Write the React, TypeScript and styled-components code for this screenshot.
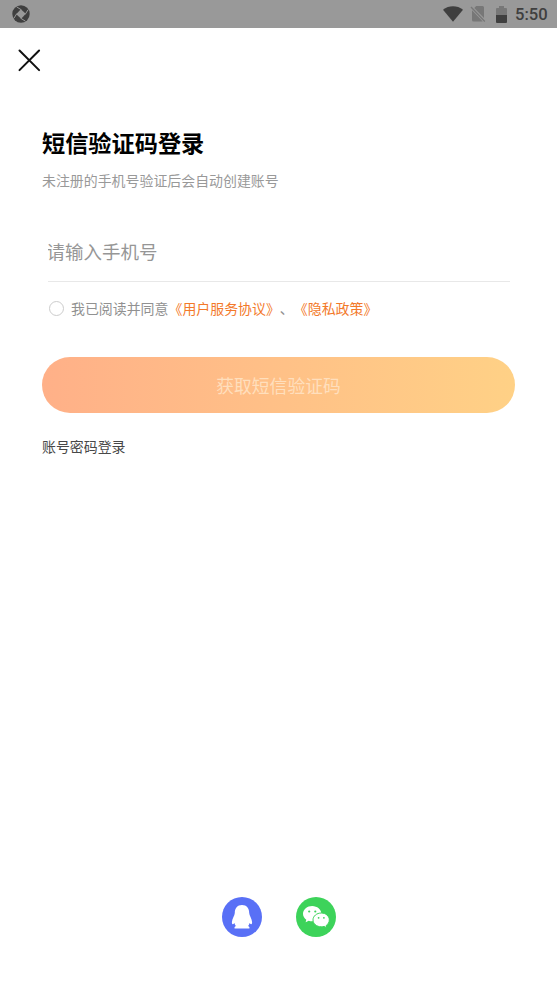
import React from "react";
import styled, { createGlobalStyle } from "styled-components";

const Global = createGlobalStyle`
  *, *::before, *::after { box-sizing: border-box; }
  body { margin: 0; background: #fff; }
  button, input { font: inherit; border: 0; padding: 0; background: none; }
`;

const Screen = styled.div`
  width: 100%;
  max-width: 557px;
  height: 990px;
  display: flex;
  flex-direction: column;
  background: #fff;
  overflow: hidden;
  font-family: "Noto Sans CJK SC", sans-serif;
`;

const StatusBar = styled.header`
  height: 28px;
  flex: none;
  display: flex;
  align-items: center;
  justify-content: space-between;
  padding: 0 10px 0 11px;
  background: #999;
  svg { display: block; }
`;

const StatusGroup = styled.div`
  display: flex;
  align-items: center;
`;

const WifiIcon = styled.svg`
  margin-right: 7px;
`;

const NoSimIcon = styled.svg`
  margin-right: 10px;
`;

const BatteryIcon = styled.svg`
  margin-right: 8px;
`;

const Clock = styled.time`
  width: 32px;
  padding-top: 2px;
  font: 500 16.6px/26px Roboto, sans-serif;
  color: #3f3f3f;
  white-space: nowrap;
`;

const TopBar = styled.nav`
  height: 65px;
  flex: none;
  padding: 20px 17px;
`;

const CloseButton = styled.button`
  display: block;
  width: 25px;
  height: 25px;
  svg { display: block; }
`;

const Content = styled.main`
  flex: 1;
  display: flex;
  flex-direction: column;
  align-items: stretch;
  padding: 32px 42px 0;
`;

const Title = styled.h1`
  margin: 0;
  font-size: 23.2px;
  font-weight: 700;
  line-height: 34px;
  color: #000;
`;

const Subtitle = styled.p`
  margin: 11px 0 0;
  font-size: 13.93px;
  line-height: 20px;
  color: #999;
`;

const PhoneField = styled.input`
  margin: 31px 5px 0 6px;
  height: 61px;
  border-bottom: 1px solid #e8e8e8;
  border-radius: 0;
  outline: none;
  font-size: 18.5px;
  color: #333;
  text-indent: -1.5px;
  &::placeholder { color: #969696; opacity: 1; }
`;

const Agreement = styled.div`
  display: flex;
  align-items: center;
  margin: 16px 0 0 7px;
  height: 20px;
`;

const Radio = styled.span`
  width: 15px;
  height: 15px;
  margin-right: 7px;
  border: 1px solid #ccc;
  border-radius: 50%;
`;

const AgreementText = styled.span`
  font-size: 13.93px;
  line-height: 20px;
  color: #919191;
  white-space: nowrap;
  text-spacing-trim: space-all;
`;

const Policy = styled.span`
  color: #f3792a;
`;

const SubmitButton = styled.button`
  height: 56px;
  margin-top: 39px;
  border-radius: 28px;
  background: linear-gradient(90deg, #ffb088, #ffd186);
  font-size: 17.8px;
  line-height: 56px;
  color: #ffdfbd;
`;

const PasswordLogin = styled.button`
  align-self: flex-start;
  margin-top: 23px;
  font-size: 13.93px;
  line-height: 20px;
  color: #484848;
`;

const SocialRow = styled.footer`
  flex: none;
  display: flex;
  justify-content: center;
  gap: 34px;
  padding-bottom: 53px;
`;

const SocialButton = styled.button<{ $color: string }>`
  width: 40px;
  height: 40px;
  border-radius: 50%;
  background: ${(p) => p.$color};
  svg { display: block; }
`;

export default function App() {
  return (
    <Screen lang="zh-CN">
      <Global />
      <StatusBar>
        <svg width="20" height="20" viewBox="0 0 20 20">
          <circle cx="10" cy="10" r="8.7" fill="#3f3f3f" />
          <path d="M9.8 5.2 14.8 9.8 10.2 14.8 5.2 10.2Z" fill="#999" />
          <path d="M10.5 5.9 5.7 2.9M14.1 10.5l3-4.8M9.5 14.1l4.8 3M5.9 9.5l-3 4.8" stroke="#999" strokeWidth="1" />
        </svg>
        <StatusGroup>
          <WifiIcon width="20" height="16" viewBox="0 0 20 16">
            <path d="M0 3.7C5.8-.8 14.2-.8 20 3.7L10 15.8Z" fill="#3f3f3f" />
          </WifiIcon>
          <NoSimIcon width="16" height="18" viewBox="0 0 16 18">
            <path d="M6.2 1H12.5q1.5 0 1.5 1.500v10.600L4.300 3ZM2 5.200 12.800 16.500H3.500Q2 16.500 2 15Z" fill="#777" />
            <path d="m1 2 13.800 14.500" stroke="#777" strokeWidth="1.3" />
          </NoSimIcon>
          <BatteryIcon width="11" height="17" viewBox="0 0 11 17">
            <path d="M3 0h5v2h2q1 0 1 1v6H0V3q0-1 1-1h2Z" fill="#777" />
            <path d="M0 9h11v7q0 1-1 1H1q-1 0-1-1Z" fill="#3f3f3f" />
          </BatteryIcon>
          <Clock>5:50</Clock>
        </StatusGroup>
      </StatusBar>
      <TopBar>
        <CloseButton aria-label="关闭">
          <svg width="25" height="25" viewBox="0 0 25 25">
            <path d="m2.500 2.500 19.600 19.600M22.100 2.500 2.500 22.100" stroke="#111" strokeWidth="2" strokeLinecap="round" />
          </svg>
        </CloseButton>
      </TopBar>
      <Content>
        <Title>短信验证码登录</Title>
        <Subtitle>未注册的手机号验证后会自动创建账号</Subtitle>
        <PhoneField type="tel" placeholder="请输入手机号" />
        <Agreement>
          <Radio />
          <AgreementText>
            我已阅读并同意<Policy>《用户服务协议》</Policy>、<Policy>《隐私政策》</Policy>
          </AgreementText>
        </Agreement>
        <SubmitButton>获取短信验证码</SubmitButton>
        <PasswordLogin>账号密码登录</PasswordLogin>
      </Content>
      <SocialRow>
        <SocialButton $color="#5970f6" aria-label="QQ">
          <svg width="40" height="40" viewBox="0 0 40 40">
            <path d="M20 8c-4.700 0-7.200 3.300-7.200 8 0 2.500-2.900 6-2.900 9.300 0 2.200 1 2.600 2.500.7.300 1.300.8 2.300 1.500 3.100-1.200.5-1.600 1.100-1.300 2.300h14.800c.3-1.200-.1-1.800-1.300-2.300.7-.8 1.200-1.800 1.500-3.100 1.500 1.900 2.500 1.500 2.500-.7 0-3.300-2.900-6.800-2.900-9.300C27.200 11.300 24.700 8 20 8Z" fill="#fff" />
          </svg>
        </SocialButton>
        <SocialButton $color="#3dd35a" aria-label="微信">
          <svg width="40" height="40" viewBox="0 0 40 40">
            <path d="M16.200 9c-5 0-9.200 3.400-9.200 7.800 0 2.400 1.200 4.500 3.300 5.900l-.7 2.600 3.100-1.600c1.100.4 2.200.6 3.500.6 5 0 9.200-3.300 9.200-7.500S21.200 9 16.200 9Z" fill="#fff" />
            <path d="M25.300 16c-4.600 0-8.300 3.100-8.300 6.900s3.700 6.900 8.300 6.900c1 0 2-.1 2.900-.4l2.700 1.400-.7-2.300c1.900-1.300 3.100-3.300 3.100-5.600 0-3.800-3.400-6.900-8-6.900Z" fill="#fff" stroke="#3dd35a" strokeWidth="1" />
            <g fill="#3dd35a">
              <circle cx="13.2" cy="14.5" r="1.1" />
              <circle cx="19.3" cy="14.5" r="1.1" />
              <circle cx="22.6" cy="20.8" r=".9" />
              <circle cx="27.9" cy="20.8" r=".9" />
            </g>
          </svg>
        </SocialButton>
      </SocialRow>
    </Screen>
  );
}
